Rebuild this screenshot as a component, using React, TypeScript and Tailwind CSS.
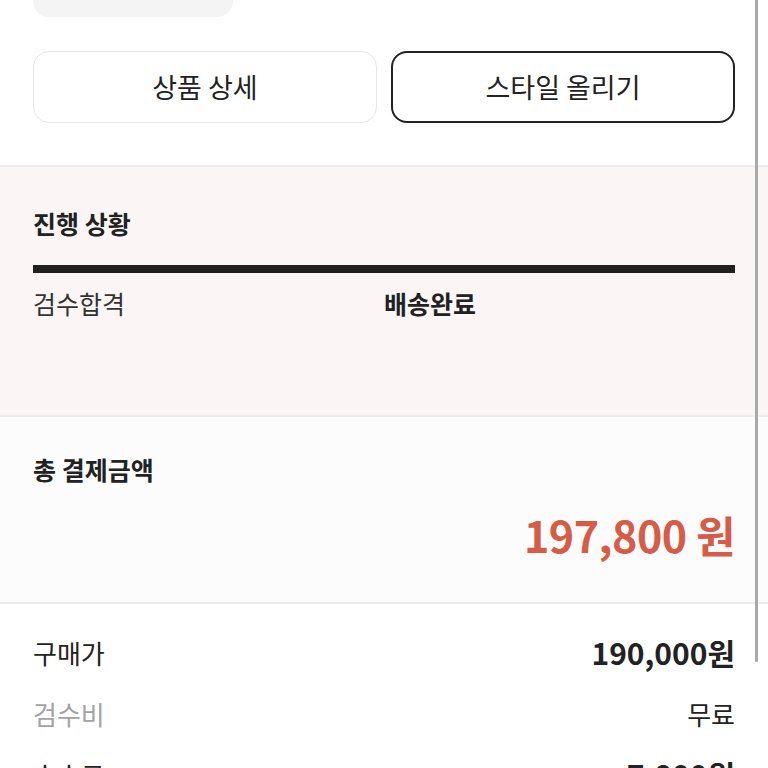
const font = { fontFamily: '"Noto Sans CJK KR", "Noto Sans", sans-serif' };

type Row = { label: string; value: string; muted?: boolean; bold?: boolean };

const rows: Row[] = [
  { label: "구매가", value: "190,000원", bold: true },
  { label: "검수비", value: "무료", muted: true },
  { label: "수수료", value: "7,800원", bold: true },
];

export default function App() {
  return (
    <div style={font} className="relative h-[768px] w-[768px] overflow-hidden bg-white text-[#222]">
      {/* scroll indicator */}
      <div className="absolute right-[10px] top-0 h-[662px] w-[3px] rounded-b-full bg-[#a9a9a9]" />

      <div className="px-[33px]">
        <div className="h-[17px] w-[200px] rounded-b-[16px] bg-[#f4f4f4]" />
        <div className="mt-[34px] grid grid-cols-2 gap-[14px]">
          <button className="flex h-[72px] items-center justify-center rounded-[16px] border border-[#e6e6e6] bg-white text-[27px] text-[#222]">
            상품 상세
          </button>
          <button className="flex h-[72px] items-center justify-center rounded-[16px] border-2 border-[#222] bg-white text-[27px] text-[#222]">
            스타일 올리기
          </button>
        </div>
      </div>

      <div className="mt-[42px] h-[250px] border-t-2 border-[#ececec] bg-[#fbf6f5] px-[33px] pt-[38px]">
        <h2 className="text-[25px] font-bold leading-[36px]">진행 상황</h2>
        <div className="mt-[24px] h-[8px] bg-[#231f1f]" />
        <div className="mt-[12px] grid grid-cols-2 text-[25px] leading-[36px]">
          <span className="text-[#333]">검수합격</span>
          <span className="font-bold text-[#222]">배송완료</span>
        </div>
      </div>

      <div className="h-[187px] border-t-2 border-[#ececec] bg-[#fcfcfc] px-[33px] pt-[34px]">
        <h2 className="text-[25px] font-bold leading-[36px]">총 결제금액</h2>
        <div className="mt-[19px] text-right text-[43px] font-bold leading-[56px] tracking-[-0.5px] text-[#d65c47]">
          197,800 원
        </div>
      </div>

      <div className="border-t-2 border-[#ececec] px-[33px] pt-[18px]">
        {rows.map((r) => (
          <div key={r.label} className="flex h-[61px] items-center justify-between text-[26px]">
            <span className={r.muted ? "text-[#a3a3a3]" : "text-[#222]"}>{r.label}</span>
            <span className={r.bold ? "text-[30px] font-bold text-[#222]" : "text-[#222]"}>{r.value}</span>
          </div>
        ))}
      </div>
    </div>
  );
}
